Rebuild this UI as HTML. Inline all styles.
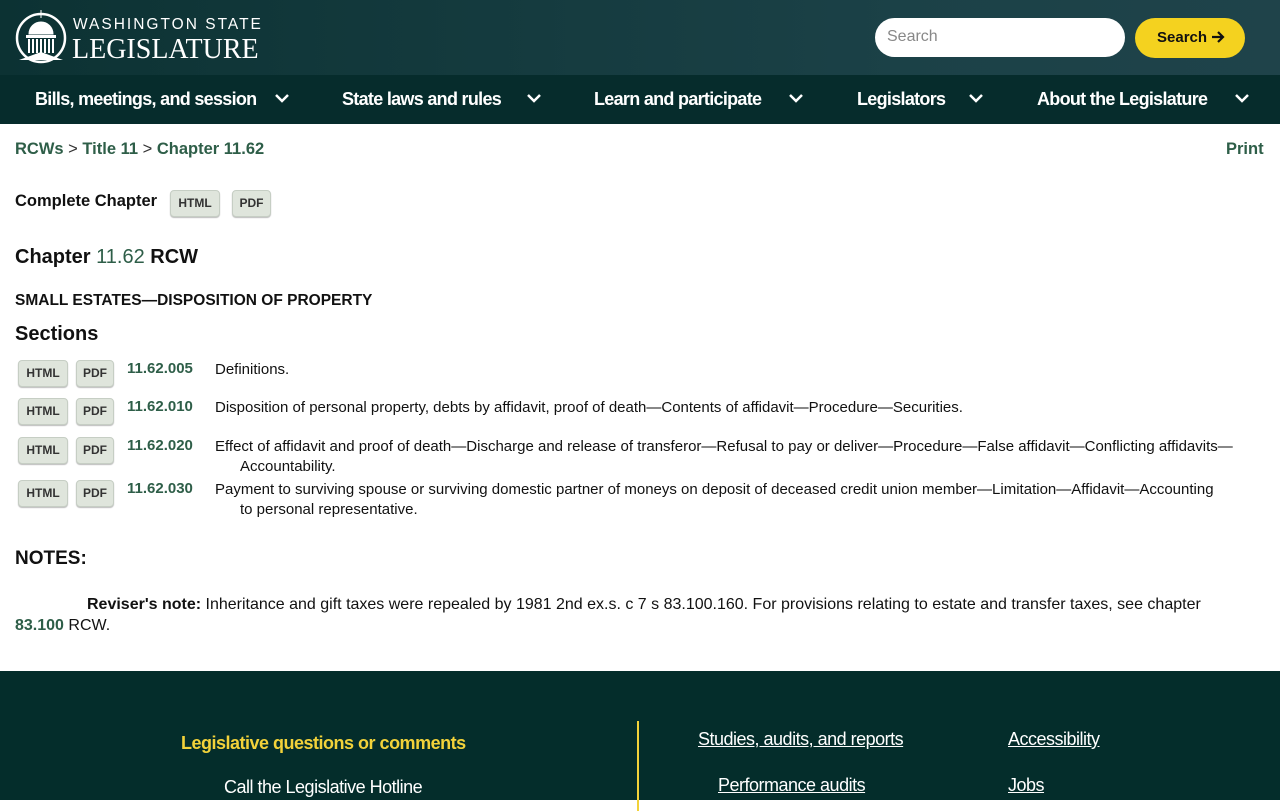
<!DOCTYPE html>
<html><head><meta charset="utf-8"><style>
*{margin:0;padding:0;box-sizing:border-box}
body{width:1280px;height:800px;overflow:hidden;font-family:"Liberation Sans",sans-serif;color:#111;background:#fff}
.hdr{height:75px;background:linear-gradient(90deg,#0c3233,#1b4147 70%,#1f434a);position:relative}
.logo{position:absolute;left:15px;top:8px}
.wst{position:absolute;left:73px;top:16px;color:#fff;font-size:15.5px;letter-spacing:2px}
.leg{position:absolute;left:72px;top:34px;color:#fff;font-family:"Liberation Serif",serif;font-size:28px;letter-spacing:0}
.search{position:absolute;left:875px;top:18px;width:250px;height:39px;background:#fff;border-radius:20px;color:#888;font-size:16px;padding:10px 12px}
.sbtn{position:absolute;left:1135px;top:18px;width:110px;height:40px;background:#f4d21f;border-radius:20px;color:#111;font-weight:bold;font-size:15px;line-height:40px;padding-left:22px}
.nav{height:49px;background:#062c2c;position:relative;color:#fff;font-weight:bold;font-size:18px;letter-spacing:-0.7px}
.nav span{position:absolute;top:14px}
.nav svg{position:absolute;top:18px}
.g{color:#2e5e48;font-weight:bold}
.c{position:absolute}
.btn{position:absolute;background:#dfe5dc;border:1px solid #c6cec4;border-radius:4px;font-size:12px;font-weight:bold;color:#333;text-align:center;line-height:25px;height:27px;box-shadow:0 1px 1px #bbb}
.row{position:absolute;left:0;width:1280px;font-size:15px}
.row .n{position:absolute;left:127px;top:0}
.row .t{position:absolute;left:215px;top:0;width:1045px;padding-left:25px;text-indent:-25px;line-height:20px}
.foot{position:absolute;top:671px;left:0;width:1280px;height:129px;background:#042d2b;color:#fff}
.foot a{color:#fff;text-decoration:underline;position:absolute;font-size:18px;letter-spacing:-0.5px}
</style></head><body>
<div class="hdr">
<svg class="logo" width="54" height="56" viewBox="0 0 54 56"><circle cx="26" cy="30" r="24" fill="none" stroke="#fff" stroke-width="2.5"/><path d="M26 2v8M14 26a12 12 0 0 1 24 0z" stroke="#fff" fill="#fff"/><rect x="11" y="27" width="30" height="3" fill="#fff"/><g stroke="#fff" stroke-width="2"><path d="M14 31v14M18 31v14M22 31v14M26 31v14M30 31v14M34 31v14M38 31v14"/></g><path d="M4 52l22-8 22 8z" fill="#fff"/></svg>
<div class="wst">WASHINGTON STATE</div>
<div class="leg">LEGISLATURE</div>
<div class="search">Search</div>
<div class="sbtn">Search <svg width="14" height="14" viewBox="0 0 14 14" style="vertical-align:-2px"><path d="M1 7h11M7 2l5 5-5 5" stroke="#111" stroke-width="2.2" fill="none"/></svg></div>
</div>
<div class="nav">
<span style="left:35px">Bills, meetings, and session</span><svg style="left:275px" width="14" height="10"><path d="M1 2l6 6 6-6" stroke="#fff" stroke-width="2.5" fill="none"/></svg>
<span style="left:342px">State laws and rules</span><svg style="left:527px" width="14" height="10"><path d="M1 2l6 6 6-6" stroke="#fff" stroke-width="2.5" fill="none"/></svg>
<span style="left:594px">Learn and participate</span><svg style="left:789px" width="14" height="10"><path d="M1 2l6 6 6-6" stroke="#fff" stroke-width="2.5" fill="none"/></svg>
<span style="left:857px">Legislators</span><svg style="left:969px" width="14" height="10"><path d="M1 2l6 6 6-6" stroke="#fff" stroke-width="2.5" fill="none"/></svg>
<span style="left:1037px">About the Legislature</span><svg style="left:1235px" width="14" height="10"><path d="M1 2l6 6 6-6" stroke="#fff" stroke-width="2.5" fill="none"/></svg>
</div>
<div class="c g" style="left:15px;top:140px;font-size:16.5px">RCWs <span style="color:#333;font-weight:normal">&gt;</span> Title 11 <span style="color:#333;font-weight:normal">&gt;</span> Chapter 11.62</div>
<div class="c g" style="left:1226px;top:140px;font-size:16.5px">Print</div>
<div class="c" style="left:15px;top:192px;font-size:16.5px;font-weight:bold">Complete Chapter</div>
<div class="btn" style="left:170px;top:190px;width:50px">HTML</div>
<div class="btn" style="left:232px;top:190px;width:39px">PDF</div>
<div class="c" style="left:15px;top:246px;font-size:20px;font-weight:bold">Chapter <span class="g" style="font-weight:normal;color:#2e5e48">11.62</span> RCW</div>
<div class="c" style="left:15px;top:292px;font-size:15.5px;font-weight:bold">SMALL ESTATES—DISPOSITION OF PROPERTY</div>
<div class="c" style="left:15px;top:323px;font-size:20px;font-weight:bold">Sections</div>
<div class="row" style="top:360px"><div class="btn" style="left:18px;top:0;width:50px">HTML</div><div class="btn" style="left:76px;top:0;width:38px">PDF</div><div class="n g">11.62.005</div><div class="t">Definitions.</div></div>
<div class="row" style="top:398px"><div class="btn" style="left:18px;top:0;width:50px">HTML</div><div class="btn" style="left:76px;top:0;width:38px">PDF</div><div class="n g">11.62.010</div><div class="t">Disposition of personal property, debts by affidavit, proof of death—Contents of affidavit—Procedure—Securities.</div></div>
<div class="row" style="top:437px"><div class="btn" style="left:18px;top:0;width:50px">HTML</div><div class="btn" style="left:76px;top:0;width:38px">PDF</div><div class="n g">11.62.020</div><div class="t">Effect of affidavit and proof of death—Discharge and release of transferor—Refusal to pay or deliver—Procedure—False affidavit—Conflicting affidavits—Accountability.</div></div>
<div class="row" style="top:480px"><div class="btn" style="left:18px;top:0;width:50px">HTML</div><div class="btn" style="left:76px;top:0;width:38px">PDF</div><div class="n g">11.62.030</div><div class="t">Payment to surviving spouse or surviving domestic partner of moneys on deposit of deceased credit union member—Limitation—Affidavit—Accounting<br>to personal representative.</div></div>
<div class="c" style="left:15px;top:548px;font-size:19px;font-weight:bold">NOTES:</div>
<div class="c" style="left:15px;top:594px;width:1250px;font-size:16px;line-height:21px;text-indent:72px"><b>Reviser's note:</b> Inheritance and gift taxes were repealed by 1981 2nd ex.s. c 7 s 83.100.160. For provisions relating to estate and transfer taxes, see chapter<br><span class="g">83.100</span> RCW.</div>
<div class="foot">
<div style="position:absolute;left:181px;top:62px;color:#f2d23a;font-weight:bold;font-size:18px;letter-spacing:-0.5px">Legislative questions or comments</div>
<div style="position:absolute;left:224px;top:106px;font-size:18px;letter-spacing:-0.5px">Call the Legislative Hotline</div>
<div style="position:absolute;left:637px;top:50px;width:2px;height:90px;background:#f2d23a"></div>
<a style="left:698px;top:58px">Studies, audits, and reports</a>
<a style="left:1008px;top:58px">Accessibility</a>
<a style="left:718px;top:104px">Performance audits</a>
<a style="left:1008px;top:104px">Jobs</a>
</div>
</body></html>
